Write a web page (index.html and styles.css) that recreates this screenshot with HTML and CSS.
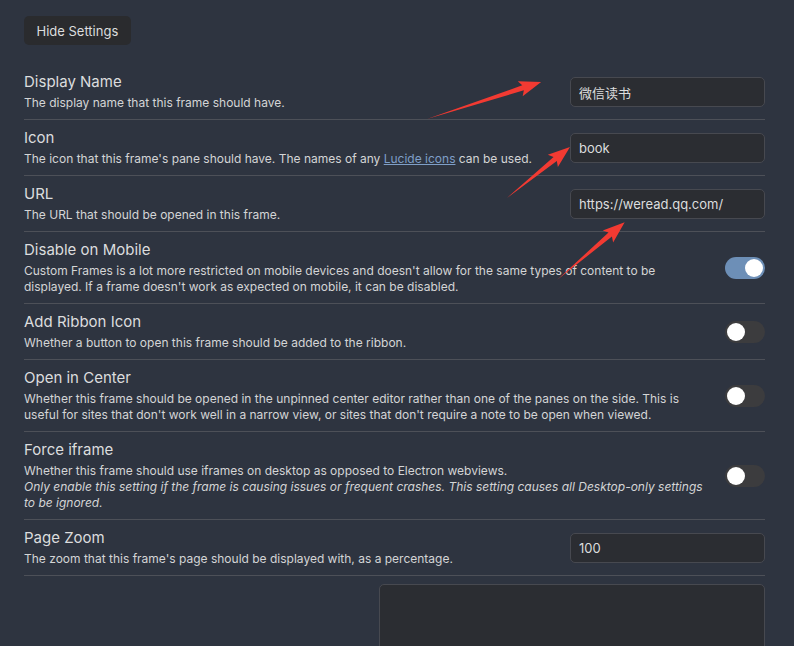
FILE: index.html
```html
<!DOCTYPE html>
<html lang="en">
<head>
<meta charset="utf-8">
<title>Custom Frames settings</title>
<link rel="stylesheet" href="styles.css">
</head>
<body>
<div class="page">
  <button class="btn">Hide Settings</button>
  <div class="settings">
    <div class="item first">
      <div class="info">
        <div class="name">Display Name</div>
        <div class="desc">The display name that this frame should have.</div>
      </div>
      <div class="control"><input class="text" type="text" value="微信读书"></div>
    </div>
    <div class="item">
      <div class="info">
        <div class="name">Icon</div>
        <div class="desc">The icon that this frame's pane should have. The names of any <a class="link" href="#">Lucide icons</a> can be used.</div>
      </div>
      <div class="control"><input class="text" type="text" value="book"></div>
    </div>
    <div class="item">
      <div class="info">
        <div class="name">URL</div>
        <div class="desc">The URL that should be opened in this frame.</div>
      </div>
      <div class="control"><input class="text" type="text" value="https://weread.qq.com/"></div>
    </div>
    <div class="item">
      <div class="info">
        <div class="name">Disable on Mobile</div>
        <div class="desc">Custom Frames is a lot more restricted on mobile devices and doesn't allow for the same types of content to be displayed. If a frame doesn't work as expected on mobile, it can be disabled.</div>
      </div>
      <div class="control"><div class="toggle on"><span class="knob"></span></div></div>
    </div>
    <div class="item">
      <div class="info">
        <div class="name">Add Ribbon Icon</div>
        <div class="desc">Whether a button to open this frame should be added to the ribbon.</div>
      </div>
      <div class="control"><div class="toggle"><span class="knob"></span></div></div>
    </div>
    <div class="item">
      <div class="info">
        <div class="name">Open in Center</div>
        <div class="desc">Whether this frame should be opened in the unpinned center editor rather than one of the panes on the side. This is useful for sites that don't work well in a narrow view, or sites that don't require a note to be open when viewed.</div>
      </div>
      <div class="control"><div class="toggle"><span class="knob"></span></div></div>
    </div>
    <div class="item">
      <div class="info">
        <div class="name">Force iframe</div>
        <div class="desc">Whether this frame should use iframes on desktop as opposed to Electron webviews.<br><em>Only enable this setting if the frame is causing issues or frequent crashes. This setting causes all Desktop-only settings to be ignored.</em></div>
      </div>
      <div class="control"><div class="toggle"><span class="knob"></span></div></div>
    </div>
    <div class="item">
      <div class="info">
        <div class="name">Page Zoom</div>
        <div class="desc">The zoom that this frame's page should be displayed with, as a percentage.</div>
      </div>
      <div class="control"><input class="text" type="text" value="100"></div>
    </div>
    <div class="item top">
      <div class="info"></div>
      <div class="control"><textarea class="area"></textarea></div>
    </div>
  </div>
</div>
<svg class="arrows" width="794" height="646" viewBox="0 0 794 646" aria-hidden="true">
  <g fill="#f23a32">
    <polygon transform="translate(427 119) rotate(-17.98)" points="0,0 101,-2.6 98,-8 120,0 98,8 101,2.6"/>
    <polygon transform="translate(507 198) rotate(-39)" points="0,0 62,-2.6 59,-8 81,0 59,8 62,2.6"/>
    <polygon transform="translate(557 280) rotate(-40.5)" points="0,0 70,-2.6 67,-8 89,0 67,8 70,2.6"/>
  </g>
</svg>
</body>
</html>
```
FILE: styles.css
```css
html, body {
  margin: 0;
  padding: 0;
  background: #2e3440;
  overflow: hidden;
}
body {
  font-family: Inter, "Noto Sans CJK SC", sans-serif;
  color: #dcddde;
}
.page {
  padding: 16px 29px 0 24px;
}
.btn {
  font-family: Inter, sans-serif;
  font-size: 13px;
  color: #dcddde;
  background: #2a2b2e;
  border: none;
  border-radius: 5px;
  height: 29px;
  padding: 0 12.5px;
  margin: 0 0 18px 0;
  display: block;
}
.settings {
  display: flex;
  flex-direction: column;
}
.item {
  display: flex;
  align-items: center;
  border-top: 1px solid #4d5058;
  padding: 9px 0 8px;
}
.item.first {
  border-top: none;
  padding-top: 10px;
}
.item.top {
  align-items: flex-start;
  padding-top: 8px;
}
.info {
  flex: 1 1 auto;
  margin-right: 16px;
}
.name {
  font-size: 15px;
  line-height: 17px;
  color: #dcddde;
}
.desc {
  font-size: 12px;
  line-height: 16px;
  margin-top: 5px;
  color: #d4d5d6;
}
.desc em {
  font-style: italic;
}
.link {
  color: #7f9fc8;
  text-decoration: underline;
}
.control {
  flex: 0 0 auto;
  display: flex;
  justify-content: flex-end;
}
.text {
  box-sizing: border-box;
  width: 195px;
  height: 30px;
  background: #2b2d32;
  border: 1px solid #474950;
  border-radius: 5px;
  color: #dcddde;
  font-family: Inter, "Noto Sans CJK SC", sans-serif;
  font-size: 13px;
  padding: 0 8px;
  outline: none;
}
.area {
  box-sizing: border-box;
  width: 386px;
  height: 110px;
  background: #2b2d32;
  border: 1px solid #474950;
  border-radius: 5px;
  resize: none;
  outline: none;
}
.toggle {
  box-sizing: border-box;
  width: 40px;
  height: 22px;
  border-radius: 11px;
  background: #3c3c3e;
  display: flex;
  align-items: center;
  padding: 0 2px;
}
.toggle.on {
  background: #6d8fb7;
  justify-content: flex-end;
}
.knob {
  width: 18px;
  height: 18px;
  border-radius: 50%;
  background: #ffffff;
}
.arrows {
  position: absolute;
  left: 0;
  top: 0;
  pointer-events: none;
}
```
